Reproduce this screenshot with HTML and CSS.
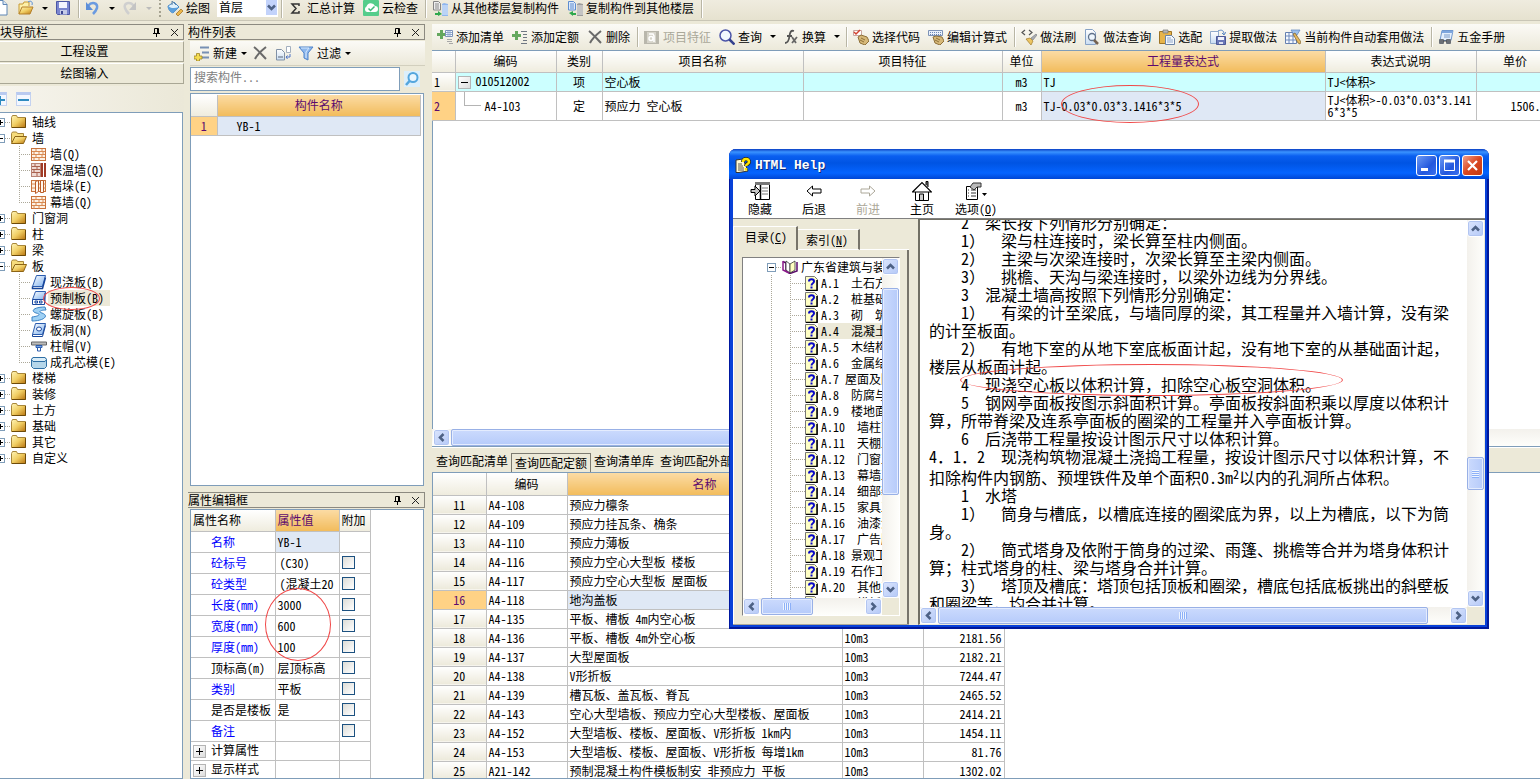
FILE: index.html
```html
<!DOCTYPE html>
<html lang="zh-CN">
<head>
<meta charset="utf-8">
<title>构件做法</title>
<link rel="stylesheet" href="styles.css">
</head>
<body>
<svg class="sprite" aria-hidden="true">
  <defs>
    <linearGradient id="gFold" x1="0" y1="0" x2="1" y2="1"><stop offset="0" stop-color="#fff6b8"/><stop offset=".5" stop-color="#f0cd62"/><stop offset="1" stop-color="#b87410"/></linearGradient>
    <linearGradient id="gBlue" x1="0" y1="0" x2="1" y2="1"><stop offset="0" stop-color="#ffffff"/><stop offset="1" stop-color="#7fb2ee"/></linearGradient>
    <linearGradient id="gDoc" x1="0" y1="0" x2="0" y2="1"><stop offset="0" stop-color="#ffffff"/><stop offset="1" stop-color="#c9ddf3"/></linearGradient>
    <symbol id="i-new" viewBox="0 0 16 16"><path d="M3 .5h7l4 4V15H3z" fill="#fff" stroke="#5f86b5"/><path d="M10 .5v4h4" fill="#dbe7f4" stroke="#5f86b5"/></symbol>
    <symbol id="i-open" viewBox="0 0 16 16"><path d="M1 14V4h4l1-2h5v4" fill="#fdf0a8" stroke="#c79a35"/><path d="M1 14L4 7h11l-3 7z" fill="url(#gFold)" stroke="#b5802a"/><path d="M10 2c3-2 5 0 4 3" fill="none" stroke="#5c92d6"/></symbol>
    <symbol id="i-save" viewBox="0 0 16 16"><path d="M1.500 1.500h13v13h-12l-1-1z" fill="#7b86cf" stroke="#4c57a5"/><path d="M4 2h8v6H4z" fill="#f4f5ff"/><path d="M5 10h7v4.500H5z" fill="#c5cbe8"/><path d="M6 11h2v3H6z" fill="#3c4690"/></symbol>
    <symbol id="i-undo" viewBox="0 0 16 16"><path d="M3 6c4-5 10-3 9 2-1 3-3 5-4 6" fill="none" stroke="#6b9be0" stroke-width="2.500"/><path d="M1 2v8h7z" fill="#5d8fd8"/></symbol>
    <symbol id="i-redo" viewBox="0 0 16 16"><path d="M12 6C8 1 1 3 3 8c1 3 2 4 4 6" fill="none" stroke="#cfcfcf" stroke-width="2.500"/><path d="M14 2v8H7z" fill="#c4c4c4"/></symbol>
    <symbol id="i-paint" viewBox="0 0 16 16"><path d="M1 6l6-4 5 5-6 6c-3-1-5-4-5-7z" fill="#dff0fb" stroke="#4888c5"/><path d="M1 6c2 2 6 3 11 1l-6 6c-3-1-5-4-5-7z" fill="#5c9fdb"/><path d="M5 5V1l4 4" fill="none" stroke="#6a8aa8"/><path d="M9 14l5-5 2 2-5 5z" fill="#edb64a" stroke="#9c6d1d" stroke-width=".7"/></symbol>
    <symbol id="i-sum" viewBox="0 0 16 16"><path d="M11 6V4H4l4 4.500L4 13h7v-2" fill="none" stroke="#333" stroke-width="1.500"/></symbol>
    <symbol id="i-cloud" viewBox="0 0 16 16"><rect width="16" height="16" rx="1" fill="#55cd8b"/><path d="M4 12a3 3 0 01-.5-5.500A4.500 4.500 0 0112 6a3 3 0 010 6z" fill="#fff"/><path d="M5.500 8.500l2 2 4-4" fill="none" stroke="#41b97a" stroke-width="1.500"/></symbol>
    <symbol id="i-copyfrom" viewBox="0 0 16 16"><path d="M1.500 1.500h5l2 2V10h-7z" fill="#eee" stroke="#858585"/><path d="M3 4h4M3 6h4M3 8h4" stroke="#888"/><path d="M10 4l2-1 4 1v12h-6z" fill="#8fb6ee"/><path d="M10 6h6M10 8h6M10 10h6M10 12h6M10 14h6" stroke="#e6f0fd"/><path d="M3 13h3v-2l4 3-4 2v-1H3z" fill="#2fa84c"/></symbol>
    <symbol id="i-copyto" viewBox="0 0 16 16"><path d="M1.500 1.500h5l2 2V10h-7z" fill="#dce9fa" stroke="#5d8cd0"/><path d="M3 4h4M3 6h4M3 8h4" stroke="#5d8cd0"/><path d="M10 4l2-1 4 1v12h-6z" fill="#9c9c9c"/><path d="M10 6h6M10 8h6M10 10h6M10 12h6M10 14h6" stroke="#ececec"/><path d="M9 13H6v-2l-4 2 4 3v-1h3z" fill="#2fa84c"/></symbol>
    <symbol id="i-addrow" viewBox="0 0 16 16"><path d="M6 2.500h9M8 7.500h7M8 12.500h7" stroke="#7790b4" stroke-width="2"/><path d="M2.500 8.500h3v2.500h2.500v3H5.500V16h-3v-2H0v-3h2.500z" fill="#f4dc52" stroke="#9f8424" stroke-width=".8"/></symbol>
    <symbol id="i-x" viewBox="0 0 16 16"><path d="M2 2c4 3 8 8 12 12M14 2C9 6 5 10 3 14" fill="none" stroke="#6a6a6a" stroke-width="2"/></symbol>
    <symbol id="i-copy" viewBox="0 0 16 16"><path d="M1.500 4.500h5l3 3V15h-8z" fill="url(#gDoc)" stroke="#8292a6"/><path d="M3 11h5v2H3z" fill="#9aa6b6"/><path d="M11.500 1.500h4v6h-4z" fill="#fff" stroke="#a3afbf"/><path d="M15 9v3h-4M12.500 10.500L11 12l1.500 2" fill="none" stroke="#4e74c8"/></symbol>
    <symbol id="i-filter" viewBox="0 0 16 16"><path d="M1 2h14L10 8v7l-4-2V8z" fill="#8db8ee" stroke="#4f83c9"/><path d="M3 3h8L8 7v6" fill="none" stroke="#d6e7fb"/></symbol>
    <symbol id="i-search" viewBox="0 0 16 16"><circle cx="9" cy="6.500" r="4.500" fill="#eaf6fe" stroke="#54a6de" stroke-width="2"/><path d="M5.500 10L2 14" stroke="#54a6de" stroke-width="2.500"/></symbol>
    <symbol id="i-addlist" viewBox="0 0 16 16"><path d="M3 1h3v3h3v3H6v3H3V7H0V4h3z" fill="#65a85f"/><path d="M8.500 1.500h7v6h-7z" fill="#fff" stroke="#7c93ba"/><path d="M9 3.500h6M9 5.500h6M11 2v5M13 2v5" stroke="#8ca6d0"/><path d="M10 10.500h5M10 12.500h5M12 14.500h4" stroke="#a7a7a7"/></symbol>
    <symbol id="i-addquota" viewBox="0 0 16 16"><path d="M3 2h3v3h3v3H6v3H3V8H0V5h3z" fill="#65a85f"/><path d="M9 2.500h6M11 5.500h4M11 8.500h4M11 11.500h4M9 14.500h6" stroke="#6f7782"/></symbol>
    <symbol id="i-feature" viewBox="0 0 16 16"><rect y="2" width="15" height="13" fill="#b9b7ac"/><rect x="3" y="3" width="9" height="11" fill="#d6d4ca"/><circle cx="7" cy="9.500" r="2" fill="none" stroke="#fff" stroke-width="1.500"/><path d="M5 5h4l1 2v6" fill="none" stroke="#fff" stroke-width="1.500"/></symbol>
    <symbol id="i-mag" viewBox="0 0 16 16"><circle cx="6.500" cy="6.500" r="5.500" fill="#f2f8ff" stroke="#4c55a8" stroke-width="1.500"/><path d="M10.500 10.500l5 5" stroke="#33408e" stroke-width="2.500"/></symbol>
    <symbol id="i-fx" viewBox="0 0 16 16"><path d="M11 2C8 1 7 3 6.500 7S5 14 2 14M4 7h5" fill="none" stroke="#555" stroke-width="1.800"/><path d="M9 8l4 6M14 8l-5 6" stroke="#666" stroke-width="1.800"/></symbol>
    <symbol id="i-pick" viewBox="0 0 16 16"><path d="M.5 1.500h8v5h-8z" fill="#fff" stroke="#c9a6a0"/><path d="M1 3l2 2 4-4" fill="none" stroke="#d2412f" stroke-width="1.500"/><path d="M5 8l3-2 6 2 2 4-4 4-5-2z" fill="#d6b878" stroke="#8e7039"/><path d="M8 9l4 2M7 11l4 2" stroke="#8e7039"/></symbol>
    <symbol id="i-editexp" viewBox="0 0 16 16"><path d="M.5 1.500h14v5H.5z" fill="#e9f0fb" stroke="#7d92b7"/><path d="M2 3.500h11M2 5.500h11" stroke="#6c87b5" stroke-dasharray="1 1"/><path d="M5 8l3-1 6 1 2 4-4 4-5-2z" fill="#d6b878" stroke="#8e7039"/><path d="M8 9l4 2M7 11l4 2" stroke="#8e7039"/></symbol>
    <symbol id="i-brush" viewBox="0 0 16 16"><path d="M4 1L1 3.500 4 6M8 1l3 2.500L8 6" fill="none" stroke="#555" stroke-width="1.200"/><path d="M5 10l4-1 3 3-2 4z" fill="#ecc562" stroke="#a0792a" stroke-width=".7"/><path d="M10 9l5-4 1 1-4 5z" fill="#a8acb5" stroke="#777" stroke-width=".6"/></symbol>
    <symbol id="i-docmag" viewBox="0 0 16 16"><path d="M1.500.5h7l3 3v12h-10z" fill="url(#gDoc)" stroke="#87a2c6"/><circle cx="8" cy="8" r="3.500" fill="#eef6fd" stroke="#61728a" stroke-width="1.300"/><path d="M10 11l4 4" stroke="#756250" stroke-width="2.500"/></symbol>
    <symbol id="i-paste" viewBox="0 0 16 16"><path d="M.5 2.500h12v12H.5z" fill="#e7b44a" stroke="#9d7425"/><path d="M4 1h5v3H4z" fill="#b6b6b6" stroke="#777" stroke-width=".7"/><path d="M6.500 6.500h6l3 3v6h-9z" fill="#f4f8fd" stroke="#6b83a6"/><path d="M8 9h4M8 11h6M8 13h6" stroke="#8fa6c8"/></symbol>
    <symbol id="i-extract" viewBox="0 0 16 16"><path d="M.5 2.500h8v12h-8z" fill="url(#gDoc)" stroke="#91aacb"/><path d="M6.500 7.500h9v8h-9z" fill="#6a78b8" stroke="#4c5896"/><path d="M8 8h6v3H8z" fill="#f0f2fb"/><path d="M9 13h4v2H9z" fill="#dce0f2"/><path d="M8 2c4-2 6 0 6 3M16 3l-2 3-2-2" fill="none" stroke="#5986c4"/></symbol>
    <symbol id="i-auto" viewBox="0 0 16 16"><path d="M.5 3.500h11v11H.5z" fill="#f6f9fe" stroke="#6580b0"/><path d="M1 7h10M1 11h10M4 4v10M8 4v10" stroke="#6d89bd"/><path d="M6 1h9l-3 5H9z" fill="#9cc0ec" stroke="#5a83be" stroke-width=".7"/><path d="M8 5l2-1 6 9-1 2-2-1z" fill="#e5b85c" stroke="#775d2e" stroke-width=".7"/></symbol>
    <symbol id="i-hard" viewBox="0 0 16 16"><path d="M4 1.500h11l-2 10H2z" fill="#e3eefc" stroke="#6f97ce"/><path d="M4 2h11v2H4z" fill="#7ea6de"/><path d="M6 6h6M6 8h6" stroke="#7d9cc9"/><rect x="1" y="10" width="5" height="5" rx="1" fill="#6a6f76"/><rect x="8" y="10" width="5" height="5" rx="1" fill="#6a6f76"/><path d="M5 12h4" stroke="#444"/></symbol>
    <symbol id="i-folder" viewBox="0 0 16 16"><path d="M.5 3.500l1-2h4l1 2h8v10H.5z" fill="url(#gFold)" stroke="#a8873a"/><path d="M14.500 4v9.500H1" fill="none" stroke="#6d4a08"/></symbol>
    <symbol id="i-folderopen" viewBox="0 0 16 16"><path d="M.5 12.500v-9l1-1.500h4l1 1.500h6V6" fill="#f6dc7c" stroke="#a8873a"/><path d="M.5 13.500L4 6.500h11.500l-3 7z" fill="url(#gFold)" stroke="#8d6415"/></symbol>
    <symbol id="i-wall" viewBox="0 0 16 16"><rect x=".5" y="2.500" width="14" height="12" fill="#fdf1e4" stroke="#c8733c"/><path d="M1 5.500h13M1 8.500h13M1 11.500h13M5 3v3M11 3v3M3 6v3M8 6v3M12 6v3M5 9v3M11 9v3M3 12v3M8 12v3" stroke="#d88a52"/></symbol>
    <symbol id="i-wallins" viewBox="0 0 16 16"><rect x=".5" y="1.500" width="9" height="13" fill="#efd9d2" stroke="#b98273"/><path d="M1 4.500h8M1 7.500h8M1 10.500h8M4 2v3M6 5v3M3 8v3M6 11v3" stroke="#a9614e"/><path d="M11 1v14M14 1v14" stroke="#a03a26" stroke-width="2"/></symbol>
    <symbol id="i-pier" viewBox="0 0 16 16"><rect x=".5" y="2.500" width="14" height="11" fill="#fdf1e4" stroke="#c8733c"/><path d="M1 6h14M1 10h14" stroke="#d88a52"/><path d="M4.500 3.500l3-1v11l-3 2zM9.500 2.500h3v12h-3z" fill="#fff8f0" stroke="#bb5c28"/></symbol>
    <symbol id="i-slab" viewBox="0 0 16 16"><path d="M5.500 1.500h9l-3 11h-10z" fill="url(#gBlue)" stroke="#2b5cae"/><path d="M1.500 12.500v2h10l3-11" fill="none" stroke="#16459b" stroke-width="1.500"/></symbol>
    <symbol id="i-precast" viewBox="0 0 16 16"><path d="M4.500 1.500h10l-1 8h-12z" fill="url(#gBlue)" stroke="#2b5cae"/><path d="M1.500 9.500h12v5h-12z" fill="#fff" stroke="#1c4aa0"/><path d="M4 11h2.500v2H4zM8.500 11H11v2H8.500z" fill="#dce9fb" stroke="#1c4aa0"/><path d="M14 3v10" stroke="#1c4aa0"/></symbol>
    <symbol id="i-spiral" viewBox="0 0 16 16"><path d="M14 1C3 1-1 5 5 7c5 1 4 3-4 4v4c11 0 18-5 10-8-4-1-2-3 4-3z" fill="#9ed0f4" stroke="#3b82c4"/></symbol>
    <symbol id="i-hole" viewBox="0 0 16 16"><path d="M4.500 1.500h10l-3 11h-10z" fill="url(#gBlue)" stroke="#2b5cae"/><path d="M1.500 12.500v2h10l3-11" fill="none" stroke="#16459b"/><ellipse cx="8" cy="7" rx="2.500" ry="2" fill="#fff" stroke="#1c4aa0"/></symbol>
    <symbol id="i-cap" viewBox="0 0 16 16"><path d="M.5 4h15v3H.5z" fill="#bbb" stroke="#666"/><path d="M5 7.500h6v2H5z" fill="#7aa5e2" stroke="#2b5cae"/><path d="M6.500 9.500h3V13h-3z" fill="#fff" stroke="#2b5cae"/></symbol>
    <symbol id="i-core" viewBox="0 0 16 16"><path d="M2 3.500h12l1.500 2v7l-2 2h-11l-2-2v-7z" fill="#b5d6ea" stroke="#2f6fa5"/><path d="M2 3.500h12l1.500 2-1.500 2H2l-1.500-2z" fill="#d9ecf7" stroke="#2f6fa5"/></symbol>
    <symbol id="i-pin" viewBox="0 0 9 10"><path d="M2.500 6V1.500h4V6M1 6.500h7M4.500 7v3M5.500 1v5" fill="none" stroke="#000"/></symbol>
    <symbol id="i-close" viewBox="0 0 9 9"><path d="M1 1l7 7M8 1L1 8" stroke="#222"/></symbol>
    <symbol id="i-chev" viewBox="0 0 9 9"><path d="M1 2.500l3.500 3.500L8 2.500" fill="none" stroke="#4d6185" stroke-width="2.500"/></symbol>
    <symbol id="h-app" viewBox="0 0 16 16"><path d="M1 3l7-1 5 12-9 1.500H1z" fill="#fff8d0" stroke="#333"/><path d="M3 7h4M3 9h5M3 11h6M3 13h6" stroke="#555"/><path d="M8 5c0-4 6-4 6 0 0 2-3 2-3 4" fill="none" stroke="#222" stroke-width="4"/><path d="M8 5c0-4 6-4 6 0 0 2-3 2-3 4M11 11v2.500" fill="none" stroke="#ffe500" stroke-width="2.500"/></symbol>
    <symbol id="h-hide" viewBox="0 0 20 18"><path d="M5.500.5h14v17h-14z" fill="#fff" stroke="#000"/><path d="M5 1.500h15" stroke="#777" stroke-width="3"/><path d="M10.500 3v14" stroke="#000" stroke-width="1.500"/><path d="M12 6h6M12 9h6M12 12h6" stroke="#777"/><path d="M1 7.500h4V4l5 5-5 5v-3.500H1z" fill="#c8c8c8" stroke="#000"/></symbol>
    <symbol id="h-arrow" viewBox="0 0 16 12"><path d="M1 6l5.500-5v3H15v4H6.500v3z" fill="#fff" stroke="currentColor"/></symbol>
    <symbol id="h-home" viewBox="0 0 20 20"><path d="M14 4V.5h2V6" fill="#777" stroke="#000"/><path d="M3.500 10v9.500h13V10" fill="#fff" stroke="#000"/><path d="M.5 11L10 1.500 19.500 11z" fill="#fff" stroke="#000" stroke-width="1.200"/><path d="M7.500 19v-6h4v6" fill="#ccc" stroke="#000"/></symbol>
    <symbol id="h-opt" viewBox="0 0 22 18"><path d="M1.500 4.500h11v13h-11z" fill="#fff" stroke="#000"/><path d="M3 8h1M6 8h5M3 11h1M6 11h5M3 14h1M6 14h5" stroke="#333"/><path d="M5 5l3-4h8v4h-4l-3 3z" fill="#bbb" stroke="#333"/><path d="M17 11h5l-2.500 3z" fill="#000"/></symbol>
    <symbol id="h-book" viewBox="0 0 16 14"><path d="M1 1.500L4 3v8l4 2.500L15 11V2" fill="#fff" stroke="#5b0b6b" stroke-width="1.500"/><path d="M4 1l4 3v9l-4-3z" fill="#fff" stroke="#333" stroke-width=".8"/><path d="M8 4l5-3v9l-5 3z" fill="#ffffc0" stroke="#333" stroke-width=".8"/><path d="M1 1v9l6 3" fill="none" stroke="#8b1a8b" stroke-width="1.500"/></symbol>
    <symbol id="h-topic" viewBox="0 0 13 15"><path d="M.5.500h9l3 3V14.500H.5z" fill="#ffffc4" stroke="#777"/><path d="M12 4v10.500H1" fill="none" stroke="#000" stroke-width="1.500"/><path d="M4 5.500c0-3 5-3 5 0 0 2-2.500 1.500-2.500 4M6.500 10.500v2" fill="none" stroke="#0808c8" stroke-width="2"/></symbol>
  </defs>
</svg>

<header class="topbar">
  <button class="tb first" aria-label="新建"><svg class="ic"><use href="#i-new"/></svg></button>
  <button class="tb" aria-label="打开"><svg class="ic"><use href="#i-open"/></svg></button><button class="drop" aria-label="打开选项"></button>
  <button class="tb" aria-label="保存"><svg class="ic"><use href="#i-save"/></svg></button>
  <i class="sep"></i>
  <button class="tb" aria-label="撤销"><svg class="ic"><use href="#i-undo"/></svg></button><button class="drop" aria-label="撤销选项"></button>
  <button class="tb" aria-label="重做"><svg class="ic"><use href="#i-redo"/></svg></button><button class="drop off" aria-label="重做选项"></button>
  <i class="grip"></i>
  <button class="tb"><svg class="ic"><use href="#i-paint"/></svg>绘图</button>
  <span class="combo"><select aria-label="楼层"><option>首层</option></select><span class="combo-btn"><svg><use href="#i-chev"/></svg></span></span>
  <i class="sep"></i>
  <button class="tb"><svg class="ic"><use href="#i-sum"/></svg>汇总计算</button>
  <button class="tb"><svg class="ic"><use href="#i-cloud"/></svg>云检查</button>
  <i class="sep"></i>
  <button class="tb"><svg class="ic"><use href="#i-copyfrom"/></svg>从其他楼层复制构件</button>
  <button class="tb"><svg class="ic"><use href="#i-copyto"/></svg>复制构件到其他楼层</button>
  <i class="sep"></i>
</header>

<div class="workspace">
  <aside class="nav">
    <div class="cap nav-cap"><span>模块导航栏</span><svg class="pin"><use href="#i-pin"/></svg><svg class="cls"><use href="#i-close"/></svg></div>
    <button class="navbtn">工程设置</button>
    <button class="navbtn">绘图输入</button>
    <div class="navtools"><button class="pm plus" aria-label="展开"></button><button class="pm" aria-label="折叠"></button></div>
    <ul class="tree">
      <li><i class="exp plus"></i><i class="dash"></i><svg class="ic"><use href="#i-folder"/></svg><span>轴线</span></li>
      <li><i class="exp"></i><i class="dash"></i><svg class="ic"><use href="#i-folderopen"/></svg><span>墙</span></li>
      <li class="kid"><i class="branch"></i><svg class="ic"><use href="#i-wall"/></svg><span>墙(Q)</span></li>
      <li class="kid"><i class="branch"></i><svg class="ic"><use href="#i-wallins"/></svg><span>保温墙(Q)</span></li>
      <li class="kid"><i class="branch"></i><svg class="ic"><use href="#i-pier"/></svg><span>墙垛(E)</span></li>
      <li class="kid last"><i class="branch"></i><svg class="ic"><use href="#i-wall"/></svg><span>幕墙(Q)</span></li>
      <li><i class="exp plus"></i><i class="dash"></i><svg class="ic"><use href="#i-folder"/></svg><span>门窗洞</span></li>
      <li><i class="exp plus"></i><i class="dash"></i><svg class="ic"><use href="#i-folder"/></svg><span>柱</span></li>
      <li><i class="exp plus"></i><i class="dash"></i><svg class="ic"><use href="#i-folder"/></svg><span>梁</span></li>
      <li><i class="exp"></i><i class="dash"></i><svg class="ic"><use href="#i-folderopen"/></svg><span>板</span></li>
      <li class="kid"><i class="branch"></i><svg class="ic"><use href="#i-slab"/></svg><span>现浇板(B)</span></li>
      <li class="kid"><i class="branch"></i><svg class="ic"><use href="#i-precast"/></svg><span class="sel">预制板(B)<i class="mark mark-slab"></i></span></li>
      <li class="kid"><i class="branch"></i><svg class="ic"><use href="#i-spiral"/></svg><span>螺旋板(B)</span></li>
      <li class="kid"><i class="branch"></i><svg class="ic"><use href="#i-hole"/></svg><span>板洞(N)</span></li>
      <li class="kid"><i class="branch"></i><svg class="ic"><use href="#i-cap"/></svg><span>柱帽(V)</span></li>
      <li class="kid last"><i class="branch"></i><svg class="ic"><use href="#i-core"/></svg><span>成孔芯模(E)</span></li>
      <li><i class="exp plus"></i><i class="dash"></i><svg class="ic"><use href="#i-folder"/></svg><span>楼梯</span></li>
      <li><i class="exp plus"></i><i class="dash"></i><svg class="ic"><use href="#i-folder"/></svg><span>装修</span></li>
      <li><i class="exp plus"></i><i class="dash"></i><svg class="ic"><use href="#i-folder"/></svg><span>土方</span></li>
      <li><i class="exp plus"></i><i class="dash"></i><svg class="ic"><use href="#i-folder"/></svg><span>基础</span></li>
      <li><i class="exp plus"></i><i class="dash"></i><svg class="ic"><use href="#i-folder"/></svg><span>其它</span></li>
      <li><i class="exp plus"></i><i class="dash"></i><svg class="ic"><use href="#i-folder"/></svg><span>自定义</span></li>
    </ul>
  </aside>

  <section class="mid">
    <div class="cap"><span>构件列表</span><svg class="pin"><use href="#i-pin"/></svg><svg class="cls"><use href="#i-close"/></svg></div>
    <div class="bar midbar">
      <button class="tb"><svg class="ic"><use href="#i-addrow"/></svg>新建</button><button class="drop" aria-label="新建选项"></button>
      <button class="tb" aria-label="删除"><svg class="ic"><use href="#i-x"/></svg></button>
      <button class="tb" aria-label="复制"><svg class="ic"><use href="#i-copy"/></svg></button>
      <button class="tb"><svg class="ic"><use href="#i-filter"/></svg>过滤</button><button class="drop" aria-label="过滤选项"></button>
    </div>
    <div class="searchrow"><input type="text" aria-label="搜索构件" placeholder="搜索构件..."><button class="go" aria-label="搜索"><svg class="ic"><use href="#i-search"/></svg></button></div>
    <div class="box complist">
      <table class="grid">
        <colgroup><col class="c-idx"><col></colgroup>
        <tr class="head"><th class="idx"></th><th class="hot">构件名称</th></tr>
        <tr class="r19"><td class="idx on">1</td><td class="blue name">YB-1</td></tr>
      </table>
    </div>
    <div class="cap propcap"><span>属性编辑框</span><svg class="pin"><use href="#i-pin"/></svg><svg class="cls"><use href="#i-close"/></svg></div>
    <div class="box props">
      <table class="grid">
        <colgroup><col class="c-pn"><col class="c-pv"><col class="c-pa"></colgroup>
        <tr class="head"><th class="l">属性名称</th><th class="hot l">属性值</th><th class="l">附加</th></tr>
        <tr><td class="pn">名称</td><td class="blue">YB-1</td><td></td></tr>
        <tr><td class="pn">砼标号</td><td class="in">(C30)</td><td><input type="checkbox" aria-label="附加 砼标号"></td></tr>
        <tr><td class="pn">砼类型</td><td class="in">(混凝土20</td><td><input type="checkbox" aria-label="附加 砼类型"></td></tr>
        <tr><td class="pn">长度(mm)</td><td>3000</td><td><input type="checkbox" aria-label="附加 长度"></td></tr>
        <tr><td class="pn">宽度(mm)</td><td class="rel">600<i class="mark mark-size"></i></td><td><input type="checkbox" aria-label="附加 宽度"></td></tr>
        <tr><td class="pn">厚度(mm)</td><td>100</td><td><input type="checkbox" aria-label="附加 厚度"></td></tr>
        <tr><td class="pn k">顶标高(m)</td><td>层顶标高</td><td><input type="checkbox" aria-label="附加 顶标高"></td></tr>
        <tr><td class="pn">类别</td><td>平板</td><td><input type="checkbox" aria-label="附加 类别"></td></tr>
        <tr><td class="pn k">是否是楼板</td><td>是</td><td><input type="checkbox" aria-label="附加 是否是楼板"></td></tr>
        <tr><td class="pn">备注</td><td></td><td><input type="checkbox" aria-label="附加 备注"></td></tr>
        <tr class="r19"><td class="grp"><button class="tg plus" aria-label="展开计算属性"></button>计算属性</td><td></td><td></td></tr>
        <tr class="r19"><td class="grp"><button class="tg plus" aria-label="展开显示样式"></button>显示样式</td><td></td><td></td></tr>
      </table>
    </div>
  </section>

  <main class="main">
    <div class="bar mainbar">
      <button class="tb"><svg class="ic"><use href="#i-addlist"/></svg>添加清单</button>
      <button class="tb"><svg class="ic"><use href="#i-addquota"/></svg>添加定额</button>
      <button class="tb"><svg class="ic"><use href="#i-x"/></svg>删除</button>
      <i class="sep"></i>
      <button class="tb" disabled><svg class="ic"><use href="#i-feature"/></svg>项目特征</button>
      <button class="tb"><svg class="ic"><use href="#i-mag"/></svg>查询</button><button class="drop" aria-label="查询选项"></button>
      <button class="tb"><svg class="ic"><use href="#i-fx"/></svg>换算</button><button class="drop" aria-label="换算选项"></button>
      <i class="sep"></i>
      <button class="tb"><svg class="ic"><use href="#i-pick"/></svg>选择代码</button>
      <button class="tb"><svg class="ic"><use href="#i-editexp"/></svg>编辑计算式</button>
      <i class="sep"></i>
      <button class="tb"><svg class="ic"><use href="#i-brush"/></svg>做法刷</button>
      <button class="tb"><svg class="ic"><use href="#i-docmag"/></svg>做法查询</button>
      <button class="tb"><svg class="ic"><use href="#i-paste"/></svg>选配</button>
      <button class="tb"><svg class="ic"><use href="#i-extract"/></svg>提取做法</button>
      <button class="tb"><svg class="ic"><use href="#i-auto"/></svg>当前构件自动套用做法</button>
      <i class="sep"></i>
      <button class="tb"><svg class="ic"><use href="#i-hard"/></svg>五金手册</button>
    </div>
    <div class="box works">
      <div class="worksview">
        <table class="grid wt">
          <colgroup><col class="w-i"><col class="w-code"><col class="w-kind"><col class="w-name"><col class="w-feat"><col class="w-unit"><col class="w-exp"><col class="w-desc"><col class="w-price"></colgroup>
          <tr class="head"><th></th><th>编码</th><th>类别</th><th>项目名称</th><th>项目特征</th><th>单位</th><th class="hot">工程量表达式</th><th>表达式说明</th><th>单价</th></tr>
          <tr class="r19 cyan"><td class="rn">1</td><td class="code"><button class="tg" aria-label="折叠"></button>010512002</td><td class="c">项</td><td>空心板</td><td></td><td class="c">m3</td><td>TJ</td><td>TJ&lt;体积&gt;</td><td></td></tr>
          <tr class="r29"><td class="rn on">2</td><td class="code sub"><i class="elbow"></i>A4-103</td><td class="c">定</td><td>预应力 空心板</td><td></td><td class="c">m3</td><td class="blue rel">TJ-0.03*0.03*3.1416*3*5<i class="mark mark-exp"></i></td><td class="two">TJ&lt;体积&gt;-0.03*0.03*3.141<br>6*3*5</td><td class="price">1506.</td></tr>
        </table>
      </div>
      <div class="hs"><button class="sb left" aria-label="向左"><svg><use href="#i-chev"/></svg></button><i class="thumb t0"></i></div>
    </div>
    <nav class="tabs"><button>查询匹配清单</button><button class="cur">查询匹配定额</button><button>查询清单库</button><button>查询匹配外部清单</button></nav>
    <div class="box quotas">
      <table class="grid qt">
        <colgroup><col class="q-i"><col class="q-code"><col class="q-name"><col class="q-unit"><col class="q-price"></colgroup>
        <tr class="head"><th></th><th>编码</th><th class="hot">名称</th><th></th><th></th></tr>
        <tr><td class="qi">11</td><td>A4-108</td><td>预应力檩条</td><td></td><td></td></tr>
        <tr><td class="qi">12</td><td>A4-109</td><td>预应力挂瓦条、桷条</td><td></td><td></td></tr>
        <tr><td class="qi">13</td><td>A4-110</td><td>预应力薄板</td><td></td><td></td></tr>
        <tr><td class="qi">14</td><td>A4-116</td><td>预应力空心大型板 楼板</td><td></td><td></td></tr>
        <tr><td class="qi">15</td><td>A4-117</td><td>预应力空心大型板 屋面板</td><td></td><td></td></tr>
        <tr><td class="qi on">16</td><td>A4-118</td><td class="blue">地沟盖板</td><td></td><td></td></tr>
        <tr><td class="qi">17</td><td>A4-135</td><td>平板、槽板 4m内空心板</td><td></td><td></td></tr>
        <tr><td class="qi">18</td><td>A4-136</td><td>平板、槽板 4m外空心板</td><td>10m3</td><td class="r">2181.56</td></tr>
        <tr><td class="qi">19</td><td>A4-137</td><td>大型屋面板</td><td>10m3</td><td class="r">2182.21</td></tr>
        <tr><td class="qi">20</td><td>A4-138</td><td>V形折板</td><td>10m3</td><td class="r">7244.47</td></tr>
        <tr><td class="qi">21</td><td>A4-139</td><td>槽瓦板、盖瓦板、脊瓦</td><td>10m3</td><td class="r">2465.52</td></tr>
        <tr><td class="qi">22</td><td>A4-143</td><td>空心大型墙板、预应力空心大型楼板、屋面板</td><td>10m3</td><td class="r">2414.21</td></tr>
        <tr><td class="qi">23</td><td>A4-152</td><td>大型墙板、楼板、屋面板、V形折板 1km内</td><td>10m3</td><td class="r">1454.11</td></tr>
        <tr><td class="qi">24</td><td>A4-153</td><td>大型墙板、楼板、屋面板、V形折板 每增1km</td><td>10m3</td><td class="r">81.76</td></tr>
        <tr><td class="qi">25</td><td>A21-142</td><td>预制混凝土构件模板制安 非预应力 平板</td><td>10m3</td><td class="r">1302.02</td></tr>
      </table>
    </div>
  </main>
</div>

<div class="win" role="dialog" aria-label="HTML Help">
  <div class="wtitle"><svg class="ic"><use href="#h-app"/></svg><span>HTML Help</span>
    <button class="wb" aria-label="最小化"><svg viewBox="0 0 19 19"><path d="M4 13.500h7" stroke="#fff" stroke-width="3"/></svg></button>
    <button class="wb" aria-label="最大化"><svg viewBox="0 0 19 19"><path d="M4.500 5v9.500h10V5M4 5.500h11" fill="none" stroke="#fff"/><path d="M4 5h11" stroke="#fff" stroke-width="3"/></svg></button>
    <button class="wb red" aria-label="关闭"><svg viewBox="0 0 19 19"><path d="M5 5l9 9M14 5l-9 9" stroke="#fff" stroke-width="2.200"/></svg></button>
  </div>
  <div class="wtools">
    <button><svg class="hi hide"><use href="#h-hide"/></svg>隐藏</button>
    <button><svg class="hi arrow"><use href="#h-arrow"/></svg>后退</button>
    <button class="dis"><svg class="hi arrow flip"><use href="#h-arrow"/></svg>前进</button>
    <button><svg class="hi"><use href="#h-home"/></svg>主页</button>
    <button><svg class="hi opt"><use href="#h-opt"/></svg><span>选项(<u>O</u>)</span></button>
  </div>
  <div class="wbody">
    <div class="toc">
      <div class="toctabs"><button class="cur">目录(<u>C</u>)</button><button>索引(<u>N</u>)</button><i></i></div>
      <div class="tocpane">
        <div class="tocbox">
          <ul class="toctree">
            <li class="root"><i class="exp"></i><i class="dash"></i><svg class="bk"><use href="#h-book"/></svg><span>广东省建筑与装饰</span></li>
            <li><i class="br"></i><svg><use href="#h-topic"/></svg><span>A.1　土石方</span></li>
            <li><i class="br"></i><svg><use href="#h-topic"/></svg><span>A.2　桩基础</span></li>
            <li><i class="br"></i><svg><use href="#h-topic"/></svg><span>A.3　砌　筑</span></li>
            <li><i class="br"></i><svg><use href="#h-topic"/></svg><span class="sel">A.4　混凝土</span></li>
            <li><i class="br"></i><svg><use href="#h-topic"/></svg><span>A.5　木结构</span></li>
            <li><i class="br"></i><svg><use href="#h-topic"/></svg><span>A.6　金属结</span></li>
            <li><i class="br"></i><svg><use href="#h-topic"/></svg><span>A.7 屋面及防</span></li>
            <li><i class="br"></i><svg><use href="#h-topic"/></svg><span>A.8　防腐与</span></li>
            <li><i class="br"></i><svg><use href="#h-topic"/></svg><span>A.9　楼地面</span></li>
            <li><i class="br"></i><svg><use href="#h-topic"/></svg><span>A.10　墙柱面</span></li>
            <li><i class="br"></i><svg><use href="#h-topic"/></svg><span>A.11　天棚工</span></li>
            <li><i class="br"></i><svg><use href="#h-topic"/></svg><span>A.12　门窗工</span></li>
            <li><i class="br"></i><svg><use href="#h-topic"/></svg><span>A.13　幕墙工</span></li>
            <li><i class="br"></i><svg><use href="#h-topic"/></svg><span>A.14　细部装</span></li>
            <li><i class="br"></i><svg><use href="#h-topic"/></svg><span>A.15　家具工</span></li>
            <li><i class="br"></i><svg><use href="#h-topic"/></svg><span>A.16　油漆涂</span></li>
            <li><i class="br"></i><svg><use href="#h-topic"/></svg><span>A.17　广告牌</span></li>
            <li><i class="br"></i><svg><use href="#h-topic"/></svg><span>A.18 景观工</span></li>
            <li><i class="br"></i><svg><use href="#h-topic"/></svg><span>A.19 石作工</span></li>
            <li><i class="br"></i><svg><use href="#h-topic"/></svg><span>A.20　其他工</span></li>
            <li><i class="br"></i><svg><use href="#h-topic"/></svg><span>A.21　模板工</span></li>
          </ul>
          <div class="vs"><button class="sb up" aria-label="向上"><svg><use href="#i-chev"/></svg></button><i class="thumb t1"></i><button class="sb" aria-label="向下"><svg><use href="#i-chev"/></svg></button></div>
          <div class="hs"><button class="sb left" aria-label="向左"><svg><use href="#i-chev"/></svg></button><i class="thumb g t2"></i><button class="sb right" aria-label="向右"><svg><use href="#i-chev"/></svg></button></div>
        </div>
      </div>
    </div>
    <div class="doc">
      <article>
        <div class="lines">
          <p>2　梁长按下列情形分别确定：</p>
          <p>1）　梁与柱连接时，梁长算至柱内侧面。</p>
          <p>2）　主梁与次梁连接时，次梁长算至主梁内侧面。</p>
          <p>3）　挑檐、天沟与梁连接时，以梁外边线为分界线。</p>
          <p>3　混凝土墙高按照下列情形分别确定：</p>
          <p>1）　有梁的计至梁底，与墙同厚的梁，其工程量并入墙计算，没有梁<br>的计至板面。</p>
          <p>2）　有地下室的从地下室底板面计起，没有地下室的从基础面计起，<br>楼层从板面计起。</p>
          <p class="noted">4　现浇空心板以体积计算，扣除空心板空洞体积。<i class="mark mark-rule"></i></p>
          <p>5　钢网亭面板按图示斜面积计算。亭面板按斜面积乘以厚度以体积计<br>算，所带脊梁及连系亭面板的圈梁的工程量并入亭面板计算。</p>
          <p>6　后浇带工程量按设计图示尺寸以体积计算。</p>
          <p class="flat">4．1．2　现浇构筑物混凝土浇捣工程量，按设计图示尺寸以体积计算，不</p>
          <p class="flat tall">扣除构件内钢筋、预埋铁件及单个面积0.3m<sup>2</sup>以内的孔洞所占体积。</p>
          <p>1　水塔</p>
          <p>1）　筒身与槽底，以槽底连接的圈梁底为界，以上为槽底，以下为筒<br>身。</p>
          <p>2）　筒式塔身及依附于筒身的过梁、雨篷、挑檐等合并为塔身体积计<br>算；柱式塔身的柱、梁与塔身合并计算。</p>
          <p>3）　塔顶及槽底：塔顶包括顶板和圈梁，槽底包括底板挑出的斜壁板<br>和圈梁等，均合并计算。</p>
        </div>
      </article>
      <div class="vs"><button class="sb up" aria-label="向上"><svg><use href="#i-chev"/></svg></button><i class="thumb g t3"></i><button class="sb" aria-label="向下"><svg><use href="#i-chev"/></svg></button></div>
      <div class="hs"><button class="sb left" aria-label="向左"><svg><use href="#i-chev"/></svg></button><i class="thumb g t4"></i><button class="sb right" aria-label="向右"><svg><use href="#i-chev"/></svg></button></div>
    </div>
  </div>
</div>
</body>
</html>
```
FILE: styles.css
```css
* { box-sizing: border-box; }
html, body { height: 100%; }
body {
  margin: 0; overflow: hidden; position: relative;
  display: flex; flex-direction: column;
  background: #ece9d8; color: #000;
  font: 12px/16px "Noto Sans Mono CJK SC", "Noto Sans CJK SC", sans-serif;
  text-spacing-trim: space-all;
  white-space: nowrap;
}
button, input, select { font: inherit; color: inherit; margin: 0; padding: 0; border: 0; background: none; }
i { font-style: normal; display: block; flex: none; }
svg { display: block; flex: none; }
ul { list-style: none; margin: 0; padding: 0; }
.sprite { position: absolute; width: 0; height: 0; }
.ic { width: 16px; height: 16px; }

/* toolbars */
.topbar { display: flex; align-items: center; height: 21px; padding-bottom: 4px; flex: none; background: linear-gradient(#efecdf, #e6e2cf); border-bottom: 1px solid #c9c6b6; }
.bar { display: flex; align-items: center; height: 25px; flex: none; background: linear-gradient(#fbfaf6, #ece9da); border-bottom: 1px solid #d2cfbe; }
.tb { display: flex; align-items: center; gap: 3px; padding: 0 4px; height: 20px; flex: none; }
.tb:disabled { color: #aaa899; }
.tb.first { margin: 0 1px 0 -11px; }
.drop { width: 13px; height: 20px; flex: none; display: grid; place-items: center; }
.drop::before { content: ""; border: 3px solid transparent; border-top-color: #000; border-bottom: 0; }
.drop.off::before { border-top-color: #bbb; }
.sep { width: 2px; height: 20px; margin: 0 1px 0 3px; background: #b9b6a5; border-right: 1px solid #fff; }
.grip { width: 2px; height: 18px; margin: 0 2px 0 4px; background: repeating-linear-gradient(#a5a290 0 2px, transparent 2px 4px); }
.combo { position: relative; width: 61px; height: 18px; margin-left: 3px; background: #fff; flex: none; }
.combo select { appearance: none; width: 100%; height: 16px; padding-left: 2px; line-height: 14px; }
.combo-btn { position: absolute; right: 1px; top: 1px; width: 11px; height: 15px; display: grid; place-items: center; background: #c3d3fb; pointer-events: none; }
.combo-btn svg, .sb svg { width: 9px; height: 9px; }
.midbar .tb { padding-right: 3px; }
.midbar .drop { width: 8px; }

/* docked panels */
.workspace { display: flex; flex: 1; min-height: 0; padding-top: 3px; }
.cap { display: flex; align-items: center; height: 16px; border: 1px solid #8c8a80; border-left: 0; padding-right: 4px; line-height: 14px; flex: none; }
.cap span { flex: 1; }
.cap .pin { width: 9px; height: 10px; margin-right: 9px; }
.cap .cls { width: 9px; height: 9px; }
.nav { width: 184px; flex: none; display: flex; flex-direction: column; overflow: hidden; }
.nav-cap span { margin-left: -12px; }
.navbtn { height: 21px; margin-top: 1px; flex: none; padding: 0 14px 1px 0; border-right: 1px solid #a9a795; border-bottom: 1px solid #a9a795; border-top: 1px solid #fff; }
.navtools { display: flex; align-items: center; gap: 9px; height: 26px; margin-top: 2px; margin-left: -8px; flex: none; background: linear-gradient(90deg, #f7f5ee, #ebe8d8); }
.pm { width: 15px; height: 14px; border: 1px solid #c4d2f0; border-top: 3px solid #b9caf0; background: linear-gradient(#2e8bc0, #2e8bc0) center/11px 2px no-repeat, #f3f7ff; }
.pm.plus { background: linear-gradient(#2e8bc0, #2e8bc0) center/11px 2px no-repeat, linear-gradient(#2e8bc0, #2e8bc0) center/2px 9px no-repeat, #f3f7ff; }
.tree { flex: 1; margin-right: 1px; padding-top: 1px; background: #fff; border: 1px solid #7f9db9; border-left: 0; }
.tree li { display: flex; align-items: center; height: 16px; }
.tree li > .exp { margin-left: -4px; }
.tree li > .ic { margin-right: 4px; }
.tree .kid { padding-left: 19px; }
.tree .kid > .ic { margin-right: 1px; }
.tree span { padding: 0 2px 0 1px; line-height: 16px; position: relative; }
.tree .kid span { padding: 0 6px 0 2px; }
.sel { background: #ece9d8; }
.exp { width: 9px; height: 9px; border: 1px solid #7f9db9; background: linear-gradient(#000, #000) center/5px 1px no-repeat, #fff; }
.exp.plus { background: linear-gradient(#000, #000) center/5px 1px no-repeat, linear-gradient(#000, #000) center/1px 5px no-repeat, #fff; }
.dash { width: 6px; height: 1px; background: repeating-linear-gradient(90deg, #aca899 0 1px, transparent 1px 2px); }
.branch, .br { align-self: stretch; width: 12px; background: repeating-linear-gradient(90deg, #aca899 0 1px, transparent 1px 2px) 0 8px/100% 1px no-repeat, repeating-linear-gradient(#aca899 0 1px, transparent 1px 2px) 0 0/1px 100% no-repeat; }
.last .branch { background-size: 100% 1px, 1px 9px; }

.mid { width: 237px; margin-left: 4px; flex: none; display: flex; flex-direction: column; }
.midbar { margin: 1px 0 0 2px; }
.searchrow { display: flex; align-items: center; gap: 4px; margin: 1px 0 0 2px; flex: none; }
.searchrow input { width: 210px; height: 24px; padding: 0 3px 6px; background: #fff; border: 1px solid #7f9db9; }
.searchrow input::placeholder { color: #808080; }
.go { background: #dceffb; }
.box { background: #fff; border: 1px solid #7f9db9; overflow: hidden; min-height: 0; }
.complist { margin: 2px 1px 0 2px; padding: 1px 2px 1px 0; height: 393px; flex: none; }
.propcap { margin-top: 6px; }
.props { margin: 1px 1px 0 2px; flex: 1; }

/* grids */
.grid { border-collapse: collapse; table-layout: fixed; width: 100%; }
.grid td, .grid th { padding: 0 2px; border-right: 1px solid #c0c0c0; border-bottom: 1px solid #c0c0c0; font-weight: normal; text-align: left; overflow: hidden; line-height: 14px; }
.grid th { text-align: center; background: linear-gradient(#fff, #efecde); }
.grid th.l { text-align: left; }
.grid .head { height: 21px; }
.grid .hot { background: linear-gradient(#fbdba4, #f2bc5c); color: #5c0a6e; }
.grid .blue { background: #dfe8f5; }
.grid .on { background: #ffd285; color: #5c0a6e; }
.grid .r19 { height: 19px; }
.grid .rel { position: relative; overflow: visible; }
.c-idx { width: 26px; }
.grid .idx { text-align: center; }
.grid .name { padding-left: 19px; }
.props .grid { width: 179px; }
.props tr { height: 21px; }
.c-pn { width: 84px; }
.c-pv { width: 64px; }
.c-pa { width: 31px; }
.grid .pn { padding-left: 20px; color: #00f; }
.grid .k { color: #000; }
.grid .in { padding-left: 4px; }
.props input { appearance: none; display: block; width: 13px; height: 13px; border: 1px solid #1c5180; background: linear-gradient(135deg, #dcdcd7, #fff); }
.grid .grp { padding-left: 2px; }
.tg { display: inline-block; width: 13px; height: 13px; margin-right: 5px; vertical-align: -2px; border: 1px solid #b4b4b4; background: linear-gradient(#000, #000) center/7px 1px no-repeat, linear-gradient(135deg, #fff, #ddd); }
.tg.plus { background: linear-gradient(#000, #000) center/7px 1px no-repeat, linear-gradient(#000, #000) center/1px 7px no-repeat, linear-gradient(135deg, #fff, #ddd); }

/* works list */
.main { flex: 1; min-width: 0; margin-left: 7px; display: flex; flex-direction: column; }
.mainbar { height: 26px; padding: 0 0 1px 1px; overflow: hidden; border-bottom: 0; }
.works { display: flex; flex-direction: column; height: 397px; flex: none; border-right: 0; border-left-width: 0; box-shadow: inset 1px 0 #7f9db9; }
.worksview { flex: 1; overflow: hidden; }
.wt { width: 1122px; }
.w-i { width: 23px; } .w-code { width: 101px; } .w-kind { width: 46px; } .w-name { width: 201px; }
.w-feat { width: 199px; } .w-unit { width: 39px; } .w-exp { width: 284px; } .w-desc { width: 151px; } .w-price { width: 78px; }
.cyan { background: #ccffff; }
.wt .rn { background: linear-gradient(#fff, #efecde); }
.wt .rn.on { background: #ffd285; }
.r29 { height: 29px; }
.wt .c { text-align: center; }
.wt .sub { padding-left: 29px; position: relative; }
.elbow { position: absolute; left: 8px; top: 0; width: 17px; height: 14px; border: solid #b4b4b4; border-width: 0 0 1px 1px; }
.wt .two { line-height: 12px; }
.wt .price { text-align: right; padding-right: 13px; }

.tabs { display: flex; align-items: flex-end; height: 25px; flex: none; padding-left: 1px; border-top: 1px solid #fff; }
.tabs button { height: 20px; padding: 0 3px 3px; line-height: 17px; }
.tabs .cur { border: 1px solid #7c7a70; border-bottom: 0; height: 19px; padding-bottom: 0; line-height: 18px; }
.quotas { flex: 1; border-right: 0; }
.qt { width: 571px; }
.q-i { width: 53px; } .q-code { width: 81px; } .q-name { width: 275px; } .q-unit { width: 81px; } .q-price { width: 81px; }
.qt tr { height: 19px; }
.qt .head { height: 22px; }
.qt .qi { text-align: center; background: linear-gradient(#fff, #ece9da); }
.qt .qi.on { background: #ffd285; }
.qt .r { text-align: right; }

/* scroll bars */
.hs, .vs { display: flex; flex: none; background: linear-gradient(#f3f1ec, #fefefb); }
.hs { height: 17px; }
.vs { width: 17px; flex-direction: column; background: linear-gradient(90deg, #f3f1ec, #fefefb); }
.sb { width: 17px; height: 17px; flex: none; display: grid; place-items: center; border: 1px solid #fff; border-radius: 3px; background: linear-gradient(135deg, #dbe5fd, #b5c9f7); box-shadow: inset 0 0 0 1px #b2c5f1; }
.sb.up svg { transform: rotate(180deg); }
.sb.left svg { transform: rotate(90deg); }
.sb.right svg { transform: rotate(-90deg); }
.thumb { border: 1px solid #98b0e6; border-radius: 2px; background: linear-gradient(#cbdafd, #b6cbfa); box-shadow: inset 0 0 0 1px #e4ecfe; display: grid; place-items: center; }
.vs .thumb { background: linear-gradient(90deg, #cbdafd, #b6cbfa); }
.g::before { content: ""; width: 8px; height: 7px; background: repeating-linear-gradient(90deg, #eef4fe 0 1px, #8cb0f8 1px 2px); }
.vs .g::before { width: 7px; height: 8px; background: repeating-linear-gradient(#eef4fe 0 1px, #8cb0f8 1px 2px); }
.hs .sb.right { margin-left: auto; }
.vs .sb:last-child { margin-top: auto; }
.works .hs { padding-left: 1px; }
.works .t0 { width: 70%; margin-left: 1px; }

/* help window */
.win { position: absolute; left: 729px; top: 149px; width: 760px; height: 480px; display: flex; flex-direction: column; padding: 0 4px 4px; background: #0841d8; border-radius: 7px 7px 0 0; box-shadow: inset 1px 0 #0018a0, inset -2px -2px #00189a; overflow: hidden; }
.wtitle { display: flex; align-items: center; gap: 2px; height: 30px; margin: 0 -4px; padding: 2px 6px 0; flex: none; color: #fff; background: linear-gradient(#0a3fc4, #3a93ff 3px, #0a5ff0 7px, #0054e3 14px, #0564ff 24px, #0046d4); }
.wtitle span { flex: 1; padding: 2px 0 0 2px; font: bold 13px/18px "Liberation Mono", monospace; text-shadow: 1px 1px #0a2a80; }
.wb { width: 21px; height: 21px; border: 1px solid #fff; border-radius: 3px; background: linear-gradient(135deg, #6d9bf5, #2257dd 60%, #3a70ee); }
.wb.red { background: linear-gradient(135deg, #f0a08c, #da4720 50%, #c23a12); }
.wtools { display: flex; height: 40px; padding-bottom: 2px; flex: none; background: #fff; border-bottom: 1px solid #808080; }
.wtools button { width: 54px; display: grid; grid-template-rows: 24px 12px; justify-items: center; align-items: center; align-content: start; line-height: 12px; }
.wtools .dis { color: #aca899; }
.hi { width: 20px; height: 20px; }
.hi.hide { height: 18px; }
.hi.arrow { width: 16px; height: 12px; }
.hi.opt { width: 22px; height: 18px; }
.flip { transform: scaleX(-1); }
.wbody { display: flex; flex: 1; min-height: 0; background: #ece9d8; }
.toc { width: 176px; padding: 7px 0 0; display: flex; flex-direction: column; flex: none; border-bottom: 1px solid #aca899; }
.toctabs { display: flex; align-items: flex-end; height: 24px; flex: none; }
.toctabs button { height: 21px; padding: 0 10px 0 8px; border-right: 2px solid #77746a; border-top: 1px solid #fff; border-bottom: 1px solid #fff; }
.toctabs .cur { height: 24px; padding: 0 9px 3px 11px; border-bottom: 0; border-left: 1px solid #fff; }
.toctabs i { flex: 1; border-bottom: 1px solid #fff; }
.tocpane { flex: 1; min-height: 0; display: flex; padding: 7px 7px 8px 8px; border-right: 2px solid #77746a; border-left: 1px solid #fff; }
.tocbox { flex: 1; min-width: 0; display: grid; grid-template: minmax(0, 1fr) 17px / minmax(0, 1fr) 17px; border: 1px solid #808080; border-right-color: #fff; border-bottom-color: #fff; background: #ece9d8; }
.toctree { overflow: hidden; background: #fff; padding-top: 1px; }
.toctree li { display: flex; align-items: center; height: 16px; padding-left: 47px; background: repeating-linear-gradient(#aca899 0 1px, transparent 1px 2px) 28px 0/1px 100% no-repeat; }
.toctree .root { padding-left: 24px; background: none; }
.toctree .br { width: 15px; }
.toctree svg { width: 13px; height: 15px; }
.toctree .bk { width: 16px; height: 14px; }
.toctree span { padding-left: 3px; flex: none; }
.doc { flex: 1; min-width: 0; margin-left: 9px; display: grid; grid-template: minmax(0, 1fr) 17px / minmax(0, 1fr) 17px; border: solid #716f64; border-width: 1px 0 1px 2px; border-bottom-color: #ece9d8; padding-right: 1px; }
.doc article { background: #fff; overflow: hidden; font-size: 16px; line-height: 18px; padding-left: 9px; }
.lines { margin-top: -7px; }
.lines p { margin: 0; text-indent: 2em; }
.lines .flat { text-indent: 0; }
.lines .tall { padding-top: 3px; }
.lines sup { font-size: 12px; line-height: 1px; vertical-align: 5px; }
.noted { position: relative; }
.tocbox .t1 { height: 207px; margin-top: 13px; }
.tocbox .t2 { width: 52px; margin-left: 1px; }
.doc .t3 { height: 33px; margin-top: 220px; }
.doc .t4 { width: 490px; margin-left: 1px; }

/* red ring annotations */
.mark { position: absolute; border: 1px solid #f04848; border-radius: 50%; pointer-events: none; z-index: 1; }
.mark-slab { left: -5px; top: -3px; width: 57px; height: 23px; }
.mark-size { left: -11px; top: -28px; width: 66px; height: 73px; }
.mark-exp { left: 19px; top: -7px; width: 138px; height: 38px; }
.mark-rule { left: 31px; top: -11px; width: 383px; height: 32px; }
```
